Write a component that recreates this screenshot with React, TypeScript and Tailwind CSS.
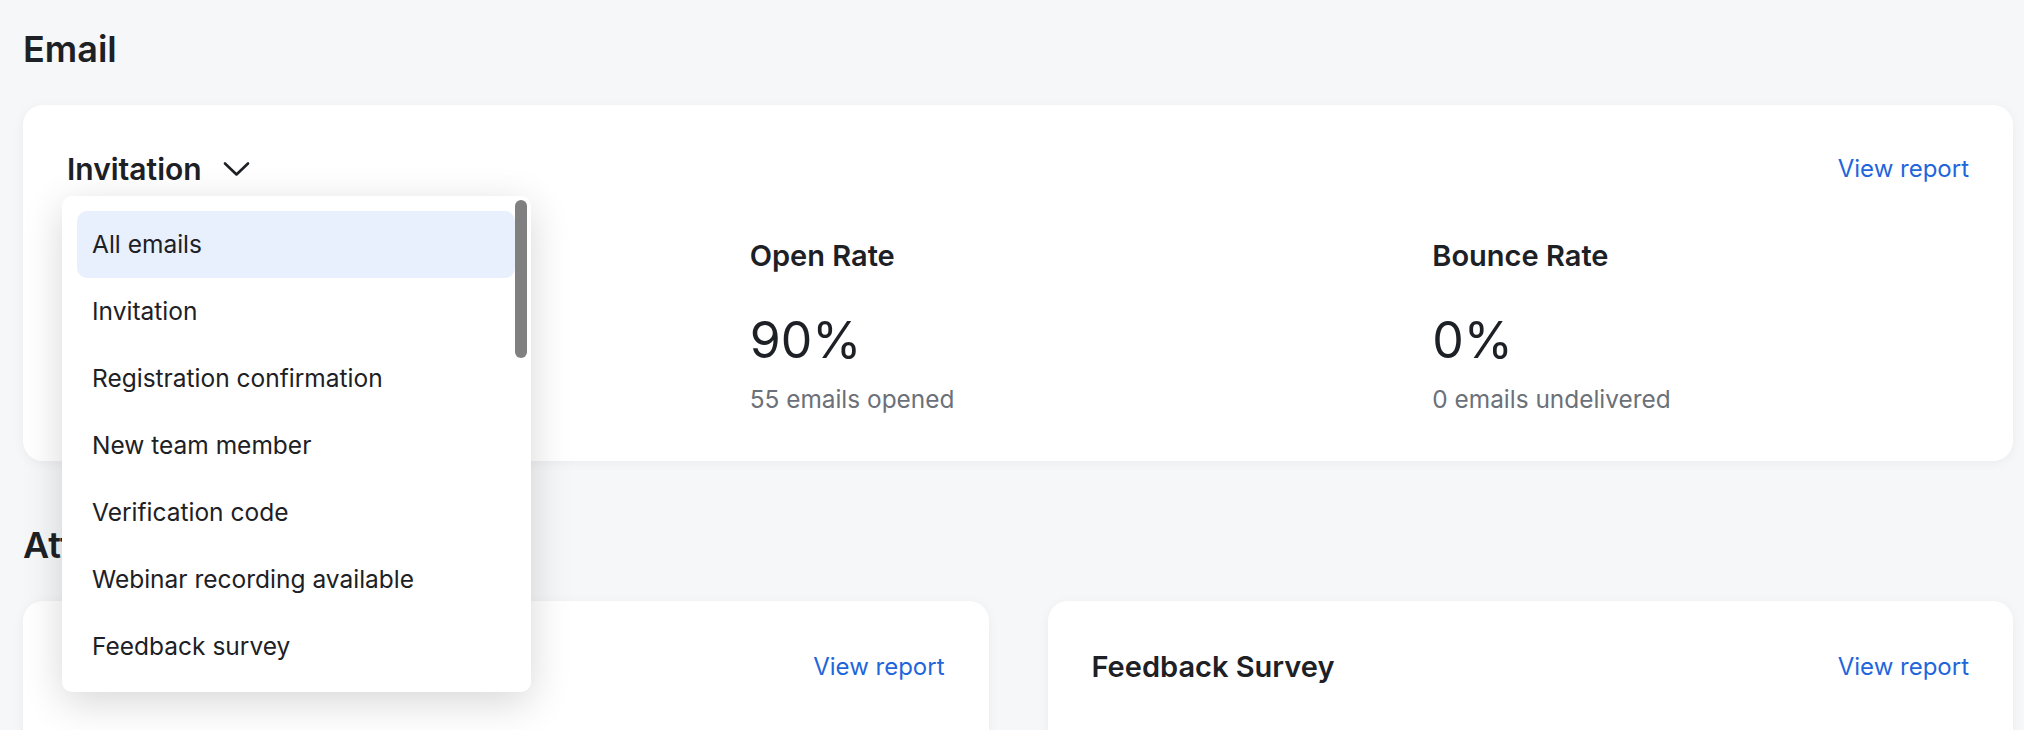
import { useState } from "react";

const emailTypes = [
  "All emails",
  "Invitation",
  "Registration confirmation",
  "New team member",
  "Verification code",
  "Webinar recording available",
  "Feedback survey",
];

const stats = [
  { label: "Delivered", value: "100%", sub: "61 emails sent" },
  { label: "Open Rate", value: "90%", sub: "55 emails opened" },
  { label: "Bounce Rate", value: "0%", sub: "0 emails undelivered" },
];

const ChevronDown = () => (
  <svg width="27" height="16" viewBox="0 0 27 16" fill="none" className="shrink-0">
    <path d="M2 2.5 L13.5 13.5 L25 2.5" stroke="#1d2125" strokeWidth="2.6" strokeLinecap="round" strokeLinejoin="round" />
  </svg>
);

const ViewReport = () => (
  <a href="#" className="text-[24px] leading-8 text-[#1f66db]">
    View report
  </a>
);

const EmailDropdown = () => {
  const [active] = useState(0);
  return (
    <div className="absolute left-[39px] top-[91px] z-20 h-[496px] w-[469px] rounded-[10px] bg-white shadow-[0_10px_40px_rgba(0,0,0,0.16)]">
      {/* Scrollbar */}
      <div className="absolute right-[4px] top-[4px] h-[158px] w-[12px] rounded-full bg-[#808080]" />
      <ul className="pl-[15px] pr-[16px] pt-[15px]">
        {emailTypes.map((name, i) => (
          <li
            key={name}
            className={`flex h-[67px] items-center rounded-[10px] px-[15px] text-[24.5px] text-[#1d2125] ${
              i === active ? "bg-[#e8f0fe]" : ""
            }`}
          >
            {name}
          </li>
        ))}
      </ul>
    </div>
  );
};

export default function App() {
  return (
    <div
      className="min-h-[730px] bg-[#f6f7f9] pl-[23px] pr-[11px] pt-[29px] text-[#1d2125]"
      style={{ fontFamily: "Inter, 'Noto Sans', sans-serif" }}
    >
      {/* Email section */}
      <h2 className="text-[36px] font-semibold leading-10">Email</h2>

      <div className="relative mt-9 rounded-[20px] bg-white px-[44px] pb-[46px] pt-[46px] shadow-[0_2px_12px_rgba(0,0,0,0.05)]">
        <div className="flex items-center justify-between">
          <button className="flex items-center gap-[21px] text-[30px] font-semibold leading-9">
            Invitation
            <ChevronDown />
          </button>
          <ViewReport />
        </div>

        <div className="mt-[51px] grid grid-cols-3 gap-x-[146px]">
          {stats.map((s) => (
            <div key={s.label}>
              <div className="text-[29px] font-semibold leading-9">{s.label}</div>
              <div className="mt-[41px] text-[50px] leading-[50px] font-normal">{s.value}</div>
              <div className="mt-[18px] text-[24.4px] leading-8 text-[#6b7079]">{s.sub}</div>
            </div>
          ))}
        </div>

        <EmailDropdown />
      </div>

      {/* Attendees section */}
      <h2 className="mt-16 text-[36px] font-semibold leading-10">Attendees</h2>

      <div className="mt-9 grid grid-cols-2 gap-[59px]">
        {["Registration Form", "Feedback Survey"].map((title) => (
          <div key={title} className="h-[300px] rounded-[20px] bg-white px-[44px] pt-[48px] shadow-[0_2px_12px_rgba(0,0,0,0.05)]">
            <div className="flex items-center justify-between">
              <h3 className="text-[29px] font-semibold leading-9">{title}</h3>
              <ViewReport />
            </div>
          </div>
        ))}
      </div>
    </div>
  );
}
